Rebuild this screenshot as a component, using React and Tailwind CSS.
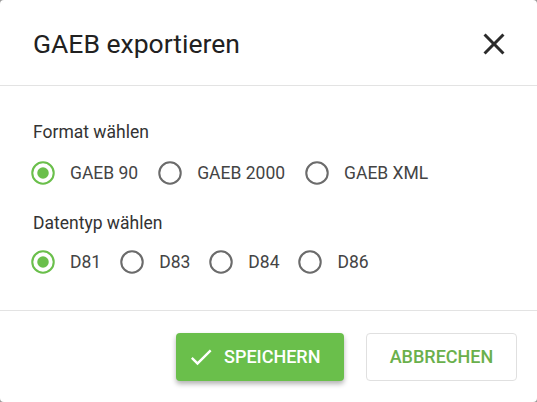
import React from "react";

function Radio({ checked, label }) {
  return (
    <div className="flex items-center">
      <svg width="26" height="26" viewBox="0 0 24 24" className="shrink-0">
        <circle
          cx="12"
          cy="12"
          r="9.9"
          fill="none"
          stroke={checked ? "#6abf4b" : "#6b6b6b"}
          strokeWidth="1.9"
        />
        {checked && <circle cx="12" cy="12" r="5.3" fill="#6abf4b" />}
      </svg>
      <span className="ml-[14px] text-[17.5px] leading-6 text-[#444444]">{label}</span>
    </div>
  );
}

export default function App() {
  return (
    <div
      className="w-[537px] h-[402px] bg-[#9a9a9a]"
      style={{ fontFamily: "Roboto, 'Noto Sans', sans-serif" }}
    >
      <div className="w-full h-full bg-white rounded-[4px] flex flex-col overflow-hidden">
        <div className="h-[86px] flex items-center justify-between pl-[33px] pr-[25px] pt-[2px] border-b border-[#e3e3e3]">
          <h1 className="text-[26.5px] leading-8 text-[#212121] font-normal">GAEB exportieren</h1>
          <svg width="36" height="36" viewBox="0 0 24 24" fill="#2b2b2b">
            <path d="M19 6.41 17.59 5 12 10.59 6.41 5 5 6.41 10.59 12 5 17.59 6.41 19 12 13.41 17.59 19 19 17.59 13.41 12z" />
          </svg>
        </div>
        <div className="pt-[34px] pb-[27px] pl-[30px] flex flex-col border-b border-[#e3e3e3]">
          <div className="h-6 pl-[3px] text-[17.5px] leading-6 text-[#333333]">Format wählen</div>
          <div className="mt-2 h-[42px] flex items-center gap-[19px]">
            <Radio checked label="GAEB 90" />
            <Radio label="GAEB 2000" />
            <Radio label="GAEB XML" />
          </div>
          <div className="mt-[17px] h-6 pl-[3px] text-[17.5px] leading-6 text-[#333333]">Datentyp wählen</div>
          <div className="mt-[6px] h-[42px] flex items-center gap-[18px]">
            <Radio checked label="D81" />
            <Radio label="D83" />
            <Radio label="D84" />
            <Radio label="D86" />
          </div>
        </div>
        <div className="flex-1 flex items-center justify-end pr-5 gap-[22px]">
          <button className="w-[168px] h-[48px] rounded-[4px] bg-[#6abf4b] shadow-[0_3px_5px_rgba(0,0,0,0.3)] flex items-center pl-[11px] text-white text-[18px] font-medium">
            <svg width="28" height="28" viewBox="0 0 24 24" fill="white" className="shrink-0">
              <path d="M9 16.17 4.83 12l-1.42 1.41L9 19 21 7l-1.41-1.41z" />
            </svg>
            <span className="ml-[9px]">SPEICHERN</span>
          </button>
          <button className="w-[151px] h-[48px] rounded-[4px] border border-[#e0e0e0] bg-white flex items-center justify-center text-[#6ab04c] text-[18px] font-medium">
            ABBRECHEN
          </button>
        </div>
      </div>
    </div>
  );
}
